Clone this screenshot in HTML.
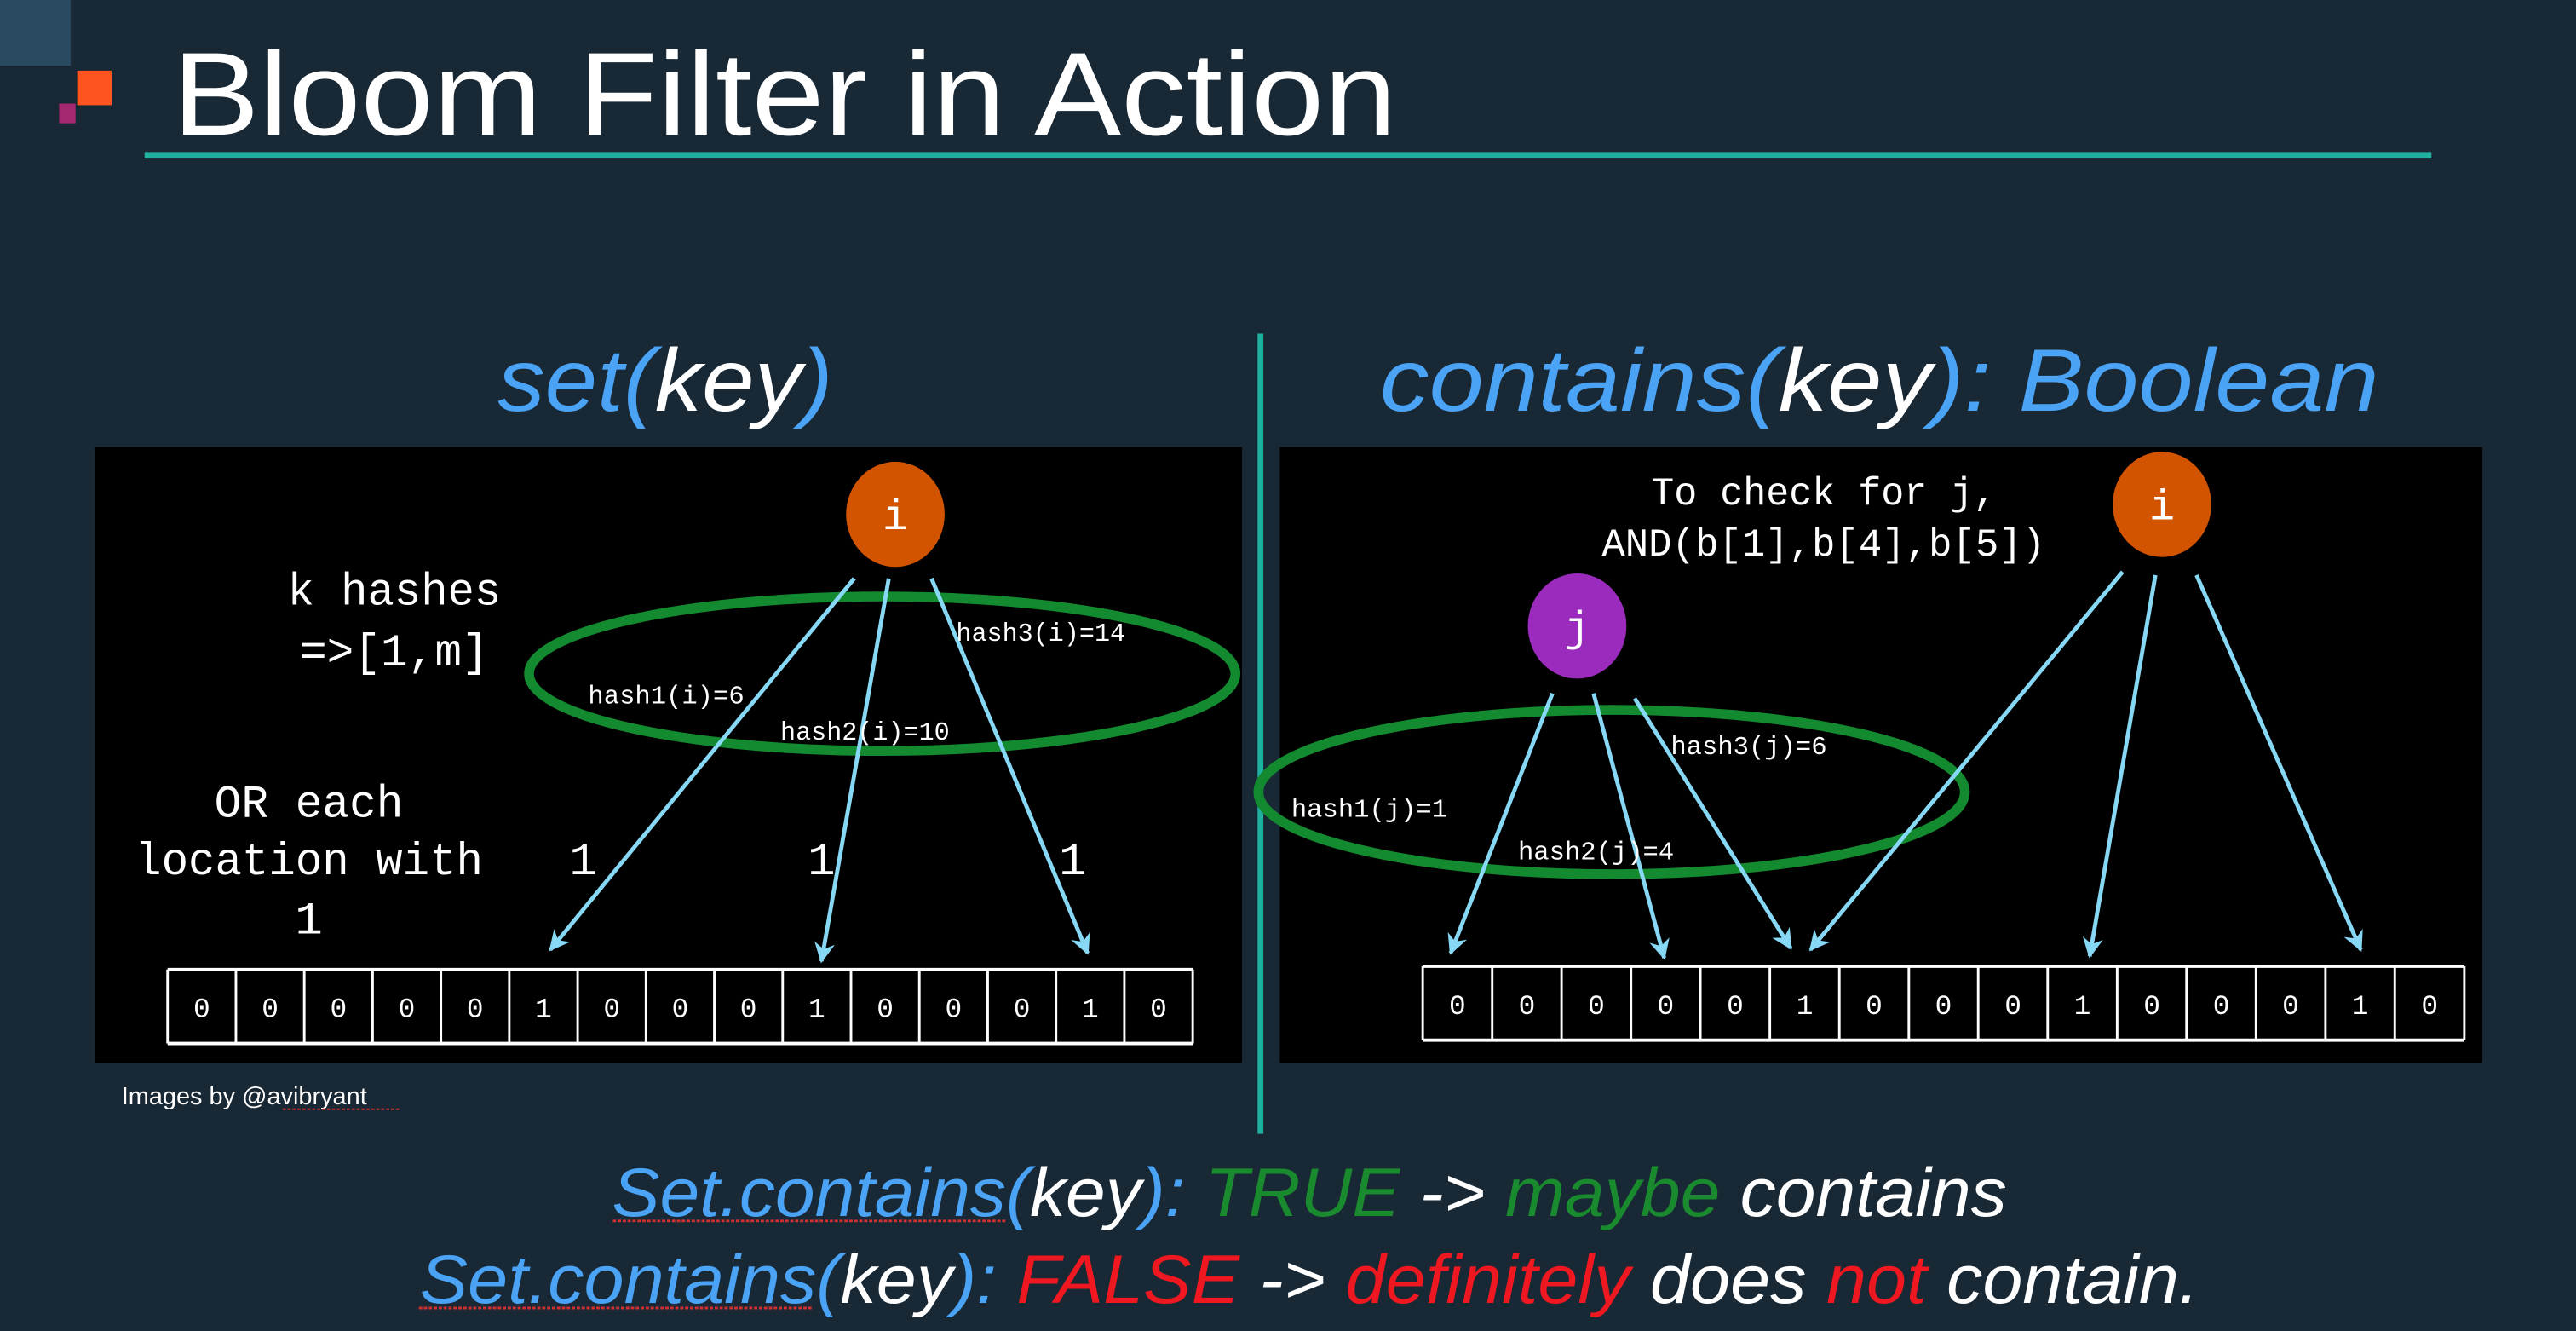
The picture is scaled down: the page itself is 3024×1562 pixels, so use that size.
<!DOCTYPE html>
<html><head><meta charset="utf-8"><style>
html,body{margin:0;padding:0;background:#182835;width:3024px;height:1562px;overflow:hidden}
svg{display:block}
.m{font-family:"Liberation Mono","DejaVu Sans Mono",monospace;fill:#fff}
.s{font-family:"Liberation Sans",sans-serif}
</style></head><body>
<svg width="3024" height="1562" viewBox="0 0 1568 810" preserveAspectRatio="none" xmlns="http://www.w3.org/2000/svg">
<defs>
<marker id="ar" viewBox="0 0 10 10" refX="9" refY="5" markerWidth="5" markerHeight="5" orient="auto"><path d="M0,0 L10,5 L0,10 L3,5 z" fill="#87d8f5"/></marker>
</defs>
<rect width="1568" height="810" fill="#182835"/>
<rect x="0" y="0" width="43" height="40" fill="#294a60"/>
<rect x="47" y="43" width="21" height="21" fill="#fe5420"/>
<rect x="36" y="63" width="10" height="12" fill="#a3286f"/>
<text x="105" y="82" class="s" font-size="72" fill="#fff" textLength="745" lengthAdjust="spacingAndGlyphs">Bloom Filter in Action</text>
<rect x="88" y="92.5" width="1392" height="4" fill="#1fb0a0"/>
<rect x="765.5" y="203" width="3.5" height="487" fill="#1fb0a0"/>

<text x="405" y="250" class="s" font-size="54" font-style="italic" text-anchor="middle" fill="#4aa3f5" textLength="204" lengthAdjust="spacingAndGlyphs">set(<tspan fill="#fff">key</tspan>)</text>
<text x="1144" y="250" class="s" font-size="54" font-style="italic" text-anchor="middle" fill="#4aa3f5" textLength="608" lengthAdjust="spacingAndGlyphs">contains(<tspan fill="#fff">key</tspan>): Boolean</text>

<!-- left panel -->
<rect x="58" y="272" width="698" height="375" fill="#000"/>
<text x="240" y="368" class="m" font-size="28" text-anchor="middle" textLength="130" lengthAdjust="spacingAndGlyphs">k hashes</text>
<text x="240" y="405" class="m" font-size="28" text-anchor="middle" textLength="115" lengthAdjust="spacingAndGlyphs">=&gt;[1,m]</text>
<text x="188" y="497" class="m" font-size="28" text-anchor="middle" textLength="115" lengthAdjust="spacingAndGlyphs">OR each</text>
<text x="188" y="532" class="m" font-size="28" text-anchor="middle" textLength="212" lengthAdjust="spacingAndGlyphs">location with</text>
<text x="188" y="568" class="m" font-size="28" text-anchor="middle">1</text>
<text x="355" y="532" class="m" font-size="28" text-anchor="middle">1</text>
<text x="500" y="532" class="m" font-size="28" text-anchor="middle">1</text>
<text x="653" y="532" class="m" font-size="28" text-anchor="middle">1</text>
<ellipse cx="545" cy="313" rx="30" ry="32" fill="#d35400"/>
<text x="545" y="322" class="m" font-size="26" text-anchor="middle">i</text>
<ellipse cx="537" cy="410" rx="215" ry="47" fill="none" stroke="#138a30" stroke-width="6"/>
<g stroke="#87d8f5" stroke-width="2.5" marker-end="url(#ar)">
<line x1="520" y1="352" x2="335" y2="578"/>
<line x1="541" y1="352" x2="500" y2="585"/>
<line x1="567" y1="352" x2="662" y2="580"/>
</g>
<text x="358" y="428" class="m" font-size="16" textLength="95" lengthAdjust="spacingAndGlyphs">hash1(i)=6</text>
<text x="475" y="450" class="m" font-size="16" textLength="103" lengthAdjust="spacingAndGlyphs">hash2(i)=10</text>
<text x="582" y="390" class="m" font-size="16" textLength="103" lengthAdjust="spacingAndGlyphs">hash3(i)=14</text>
<g stroke="#fff" stroke-width="2" fill="none">
<line x1="102" y1="590" x2="726" y2="590"/><line x1="102" y1="635" x2="726" y2="635"/>
</g>
<g id="cellsL"></g>

<!-- right panel -->
<rect x="779" y="272" width="732" height="375" fill="#000"/>
<text x="1110" y="307" class="m" font-size="24" text-anchor="middle" textLength="210" lengthAdjust="spacingAndGlyphs">To check for j,</text>
<text x="1110" y="338" class="m" font-size="24" text-anchor="middle" textLength="270" lengthAdjust="spacingAndGlyphs">AND(b[1],b[4],b[5])</text>
<ellipse cx="1316" cy="307" rx="30" ry="32" fill="#d35400"/>
<text x="1316" y="316" class="m" font-size="26" text-anchor="middle">i</text>
<ellipse cx="960" cy="381" rx="30" ry="32" fill="#9b2bbd"/>
<text x="960" y="390" class="m" font-size="26" text-anchor="middle">j</text>
<ellipse cx="981" cy="482" rx="215" ry="50" fill="none" stroke="#138a30" stroke-width="6"/>
<g stroke="#87d8f5" stroke-width="2.5" marker-end="url(#ar)">
<line x1="945" y1="422" x2="883" y2="580"/>
<line x1="970" y1="422" x2="1013" y2="583"/>
<line x1="995" y1="425" x2="1090" y2="577"/>
<line x1="1292" y1="348" x2="1102" y2="578"/>
<line x1="1312" y1="350" x2="1272" y2="582"/>
<line x1="1337" y1="350" x2="1437" y2="578"/>
</g>
<text x="786" y="497" class="m" font-size="16" textLength="95" lengthAdjust="spacingAndGlyphs">hash1(j)=1</text>
<text x="924" y="523" class="m" font-size="16" textLength="95" lengthAdjust="spacingAndGlyphs">hash2(j)=4</text>
<text x="1017" y="459" class="m" font-size="16" textLength="95" lengthAdjust="spacingAndGlyphs">hash3(j)=6</text>
<g stroke="#fff" stroke-width="2" fill="none">
<line x1="866" y1="588" x2="1500" y2="588"/><line x1="866" y1="633" x2="1500" y2="633"/>
</g>

<!-- cells -->
<g stroke="#fff" stroke-width="1.5">
<line x1="102" y1="590" x2="102" y2="635"/><line x1="143.6" y1="590" x2="143.6" y2="635"/><line x1="185.2" y1="590" x2="185.2" y2="635"/><line x1="226.8" y1="590" x2="226.8" y2="635"/><line x1="268.4" y1="590" x2="268.4" y2="635"/><line x1="310" y1="590" x2="310" y2="635"/><line x1="351.6" y1="590" x2="351.6" y2="635"/><line x1="393.2" y1="590" x2="393.2" y2="635"/><line x1="434.8" y1="590" x2="434.8" y2="635"/><line x1="476.4" y1="590" x2="476.4" y2="635"/><line x1="518" y1="590" x2="518" y2="635"/><line x1="559.6" y1="590" x2="559.6" y2="635"/><line x1="601.2" y1="590" x2="601.2" y2="635"/><line x1="642.8" y1="590" x2="642.8" y2="635"/><line x1="684.4" y1="590" x2="684.4" y2="635"/><line x1="726" y1="590" x2="726" y2="635"/>
<line x1="866" y1="588" x2="866" y2="633"/><line x1="908.3" y1="588" x2="908.3" y2="633"/><line x1="950.5" y1="588" x2="950.5" y2="633"/><line x1="992.8" y1="588" x2="992.8" y2="633"/><line x1="1035" y1="588" x2="1035" y2="633"/><line x1="1077.3" y1="588" x2="1077.3" y2="633"/><line x1="1119.6" y1="588" x2="1119.6" y2="633"/><line x1="1161.9" y1="588" x2="1161.9" y2="633"/><line x1="1204.1" y1="588" x2="1204.1" y2="633"/><line x1="1246.4" y1="588" x2="1246.4" y2="633"/><line x1="1288.7" y1="588" x2="1288.7" y2="633"/><line x1="1330.9" y1="588" x2="1330.9" y2="633"/><line x1="1373.2" y1="588" x2="1373.2" y2="633"/><line x1="1415.5" y1="588" x2="1415.5" y2="633"/><line x1="1457.7" y1="588" x2="1457.7" y2="633"/><line x1="1500" y1="588" x2="1500" y2="633"/>
</g>
<g class="m" font-size="17" text-anchor="middle">
<text x="122.8" y="619">0</text><text x="164.4" y="619">0</text><text x="206" y="619">0</text><text x="247.6" y="619">0</text><text x="289.2" y="619">0</text><text x="330.8" y="619">1</text><text x="372.4" y="619">0</text><text x="414" y="619">0</text><text x="455.6" y="619">0</text><text x="497.2" y="619">1</text><text x="538.8" y="619">0</text><text x="580.4" y="619">0</text><text x="622" y="619">0</text><text x="663.6" y="619">1</text><text x="705.2" y="619">0</text>
<text x="887.1" y="617">0</text><text x="929.4" y="617">0</text><text x="971.7" y="617">0</text><text x="1013.9" y="617">0</text><text x="1056.2" y="617">0</text><text x="1098.5" y="617">1</text><text x="1140.7" y="617">0</text><text x="1183" y="617">0</text><text x="1225.3" y="617">0</text><text x="1267.5" y="617">1</text><text x="1309.8" y="617">0</text><text x="1352.1" y="617">0</text><text x="1394.3" y="617">0</text><text x="1436.6" y="617">1</text><text x="1478.9" y="617">0</text>
</g>

<text x="74" y="672" class="s" font-size="15" fill="#fff">Images by @avibryant</text>
<line x1="172" y1="675" x2="244" y2="675" stroke="#d03030" stroke-width="1" stroke-dasharray="2,1"/>

<text x="797" y="740" class="s" font-size="42" font-style="italic" text-anchor="middle" fill="#4aa3f5" textLength="849" lengthAdjust="spacingAndGlyphs">Set.contains(<tspan fill="#fff">key</tspan>):  <tspan fill="#1a8a2e">TRUE</tspan><tspan fill="#fff"> -&gt; </tspan><tspan fill="#1a8a2e">maybe</tspan><tspan fill="#fff"> contains</tspan></text>
<line x1="373" y1="743" x2="613" y2="743" stroke="#d03030" stroke-width="1.5" stroke-dasharray="2,1"/>
<text x="797" y="793" class="s" font-size="42" font-style="italic" text-anchor="middle" fill="#4aa3f5" textLength="1083" lengthAdjust="spacingAndGlyphs">Set.contains(<tspan fill="#fff">key</tspan>):  <tspan fill="#f01820">FALSE</tspan><tspan fill="#fff"> -&gt; </tspan><tspan fill="#f01820">definitely</tspan><tspan fill="#fff"> does </tspan><tspan fill="#f01820">not</tspan><tspan fill="#fff"> contain.</tspan></text>
<line x1="255" y1="796" x2="495" y2="796" stroke="#d03030" stroke-width="1.5" stroke-dasharray="2,1"/>
</svg>
</body></html>
